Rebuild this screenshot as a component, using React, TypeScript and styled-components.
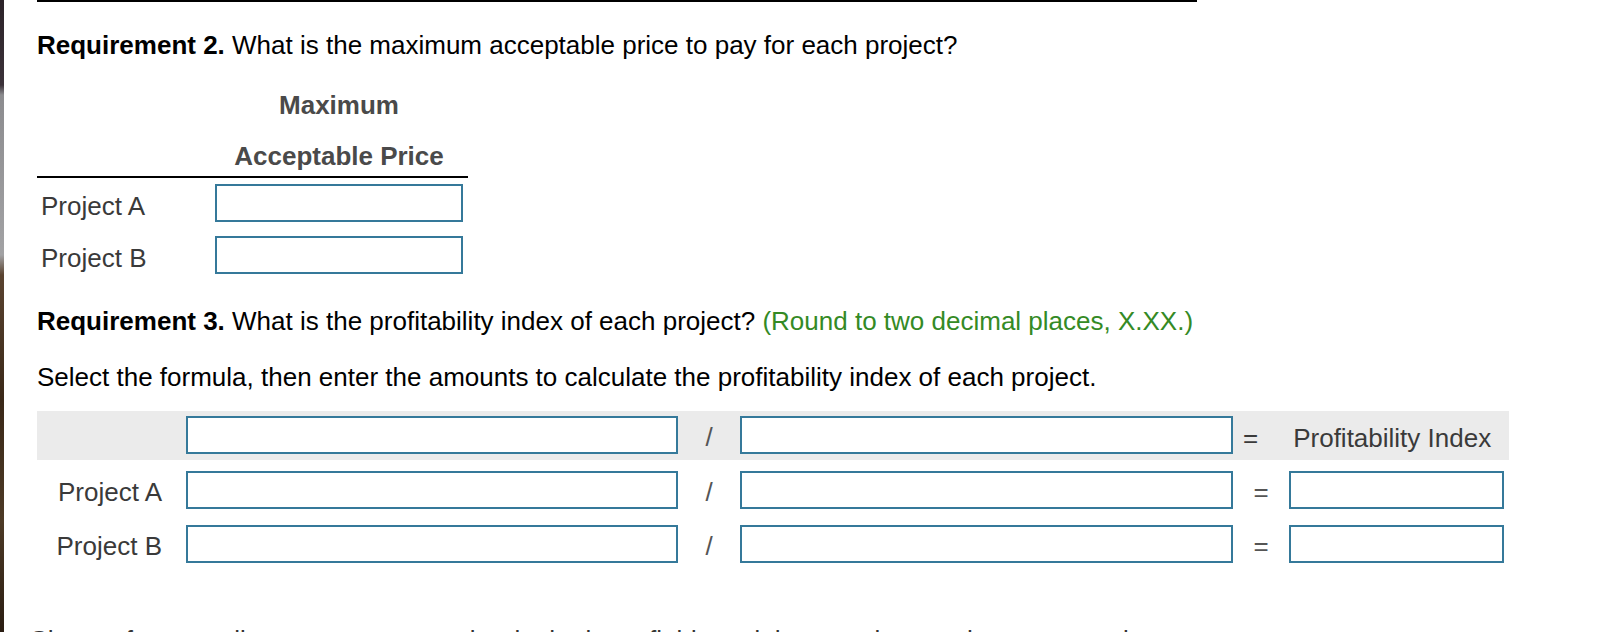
import React from "react";
import styled, { createGlobalStyle } from "styled-components";

const GlobalStyle = createGlobalStyle`
  body {
    margin: 0;
    background: #fff;
    font-family: "Liberation Sans", Arial, Helvetica, sans-serif;
  }
`;

const Page = styled.div`
  display: flex;
  min-height: 100vh;
  overflow: hidden;
`;

/* the sliver of desktop wallpaper at the window's left edge */
const EdgeStrip = styled.div`
  flex: none;
  width: 4px;
  background: linear-gradient(
    to bottom,
    #2c2329 0,
    #3b3239 85px,
    #8c8c8f 95px,
    #a2a2a4 255px,
    #5a4330 275px,
    #3a2818 400px,
    #4d3a26 520px,
    #2a1d12 632px
  );
`;

const Content = styled.div`
  padding-left: 33px;
  width: 1500px;
  display: flex;
  flex-direction: column;
  font-size: 26px;
  line-height: 30px;
  color: #000;
`;

const TopRule = styled.div`
  width: 1160px;
  height: 2px;
  background: #000;
`;

const Prompt = styled.p<{ $top: number }>`
  margin: ${(p) => p.$top}px 0 0;
  white-space: nowrap;
`;

const Hint = styled.span`
  color: #348a25;
`;

const PriceTable = styled.div`
  width: 431px;
  margin-top: 30px;
`;

const PriceHead = styled.div`
  display: grid;
  grid-template-columns: 178px 248px;
  row-gap: 21px;
  padding-bottom: 5px;
  border-bottom: 2px solid #000;
`;

const HeadLabel = styled.div`
  grid-column: 2;
  text-align: center;
  font-weight: bold;
  color: #4a4a4a;
`;

const PriceRow = styled.div<{ $gap: number }>`
  display: grid;
  grid-template-columns: 178px 248px;
  align-items: center;
  height: 38px;
  margin-top: ${(p) => p.$gap}px;
`;

const RowLabel = styled.div`
  color: #3a3a3a;
  padding: 5px 0 0 4px;
`;

const AnswerBox = styled.input`
  box-sizing: border-box;
  width: 100%;
  height: 38px;
  margin: 0;
  border: 2px solid #35799a;
  border-radius: 0;
  background: #fff;
  outline: none;
`;

const FormulaTable = styled.div`
  width: 1472px;
  margin-top: 19px;
`;

const FormulaRow = styled.div<{ $shaded?: boolean; $gap: number }>`
  display: grid;
  grid-template-columns: 149px 492px 62px 493px 56px 215px;
  align-items: center;
  margin-top: ${(p) => p.$gap}px;
  padding: ${(p) => (p.$shaded ? "5px 5px 6px 0" : "0 5px 0 0")};
  background: ${(p) => (p.$shaded ? "#ebebeb" : "transparent")};
`;

const FormulaLabel = styled.div`
  color: #3a3a3a;
  text-align: right;
  padding: 4px 24px 0 0;
`;

const Operator = styled.div`
  color: #555;
  text-align: center;
  padding-top: 4px;
`;

const ResultHead = styled.div`
  grid-column: span 2;
  display: flex;
  align-items: center;
  gap: 35px;
  padding: 6px 0 0 10px;
  color: #3a3a3a;
`;

const NextNote = styled.p`
  margin: 62px 0 0 -8px;
  white-space: nowrap;
  color: #333;
`;

const rows = ["Project A", "Project B"];

export default function App() {
  return (
    <>
      <GlobalStyle />
      <Page>
        <EdgeStrip />
        <Content>
          <TopRule />
          <Prompt $top={28}>
            <b>Requirement 2.</b> What is the maximum acceptable price to pay
            for each project?
          </Prompt>

          <PriceTable>
            <PriceHead>
              <HeadLabel>Maximum</HeadLabel>
              <HeadLabel>Acceptable Price</HeadLabel>
            </PriceHead>
            {rows.map((r, i) => (
              <PriceRow key={r} $gap={i === 0 ? 6 : 14}>
                <RowLabel>{r}</RowLabel>
                <AnswerBox type="text" />
              </PriceRow>
            ))}
          </PriceTable>

          <Prompt $top={32}>
            <b>Requirement 3.</b> What is the profitability index of each
            project? <Hint>(Round to two decimal places, X.XX.)</Hint>
          </Prompt>
          <Prompt $top={26}>
            Select the formula, then enter the amounts to calculate the
            profitability index of each project.
          </Prompt>

          <FormulaTable>
            <FormulaRow $shaded $gap={0}>
              <div />
              <AnswerBox type="text" />
              <Operator>/</Operator>
              <AnswerBox type="text" />
              <ResultHead>
                <span>=</span>
                <span>Profitability Index</span>
              </ResultHead>
            </FormulaRow>
            {rows.map((r, i) => (
              <FormulaRow key={r} $gap={i === 0 ? 11 : 16}>
                <FormulaLabel>{r}</FormulaLabel>
                <AnswerBox type="text" />
                <Operator>/</Operator>
                <AnswerBox type="text" />
                <Operator>=</Operator>
                <AnswerBox type="text" />
              </FormulaRow>
            ))}
          </FormulaTable>

          <NextNote>
            Choose from any list or enter any number in the input fields and
            then continue to the next question.
          </NextNote>
        </Content>
      </Page>
    </>
  );
}
